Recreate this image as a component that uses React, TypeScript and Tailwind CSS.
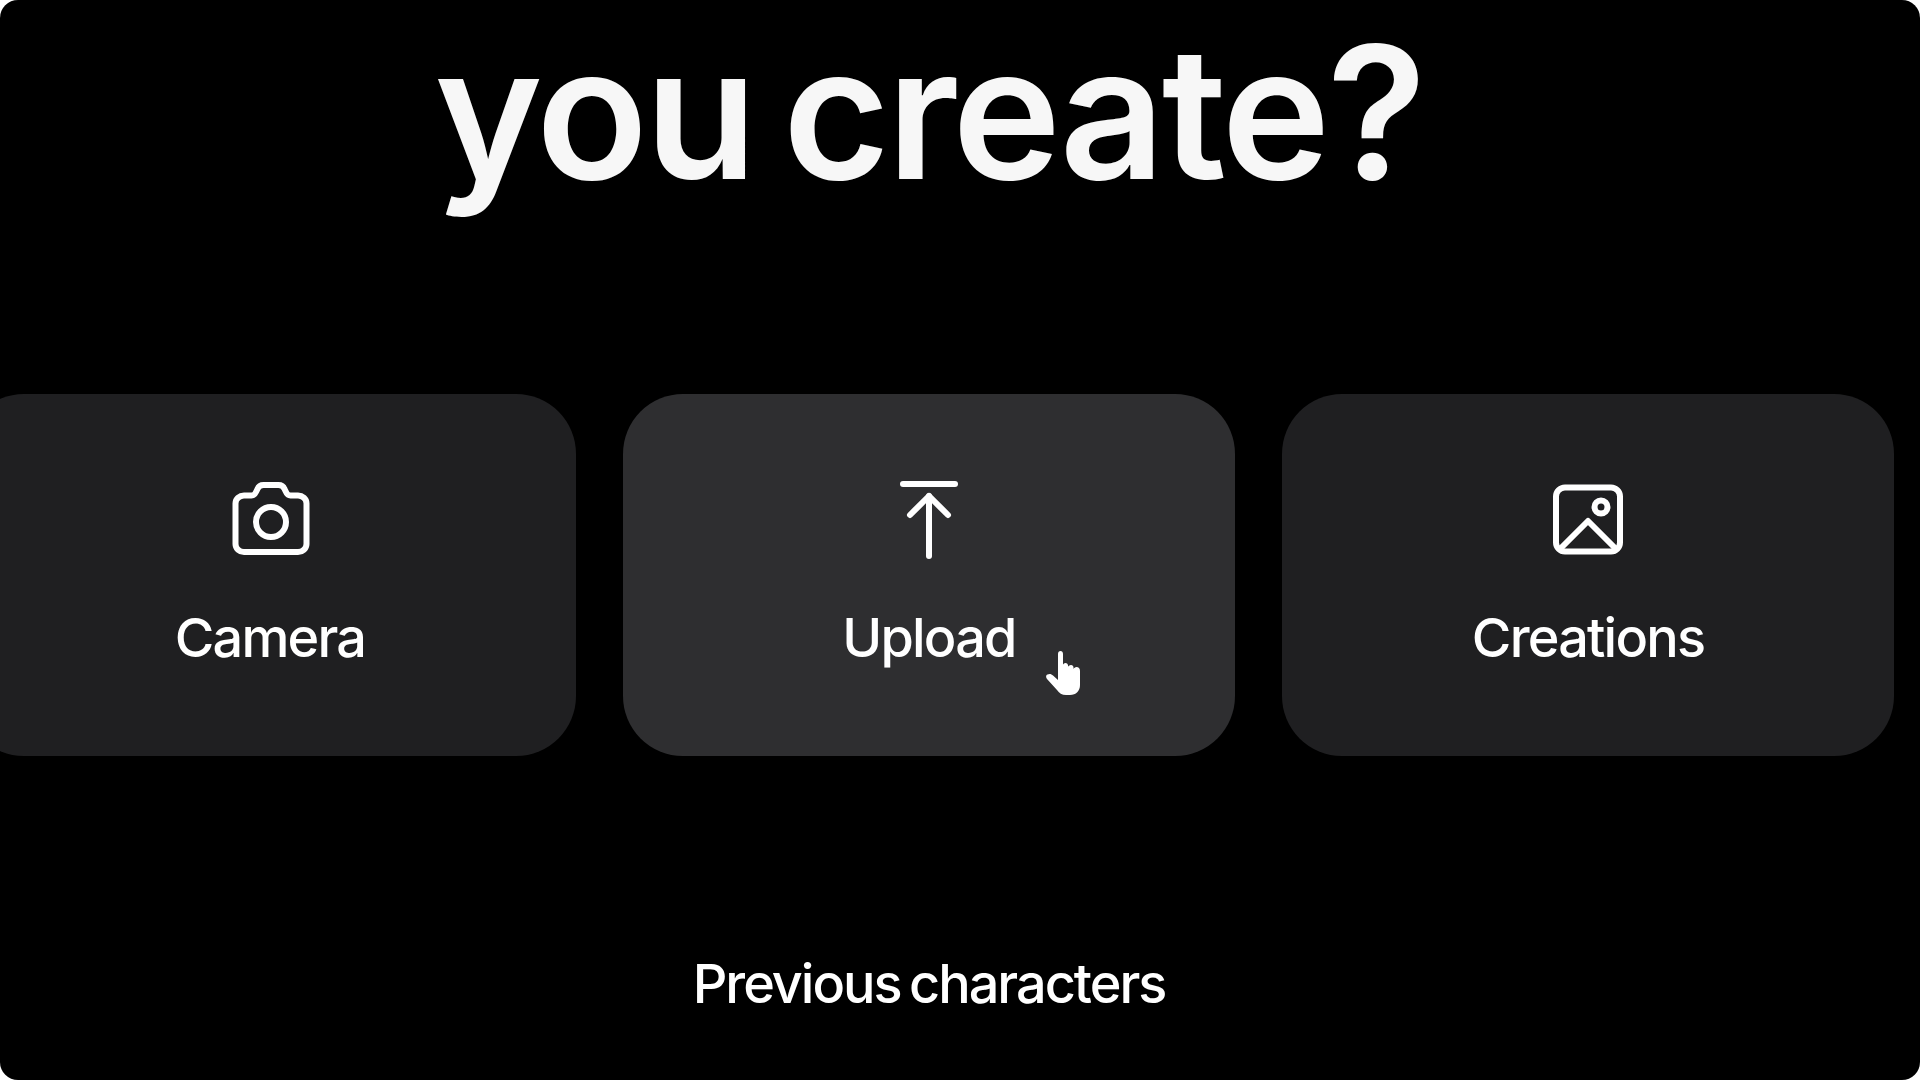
const font = { fontFamily: "Inter, 'Liberation Sans', sans-serif" };

function CameraIcon() {
  return (
    <svg viewBox="0 0 80 80" className="h-20 w-20" fill="none" stroke="currentColor" strokeWidth="6" strokeLinejoin="round">
      <g transform="translate(1 0)">
        <path d="M13 15.5H20.5C22.5 15.5 24 14.5 25 12L26.5 9C27.5 6.5 29.5 5 32.5 5H47.5C50.5 5 52.5 6.5 53.5 9L55 12C56 14.5 57.5 15.5 59.5 15.5H67C71.5 15.5 75.5 19 75.5 23.5V64C75.5 68.5 71.5 72 67 72H13C8.5 72 4.5 68.5 4.5 64V23.5C4.5 19 8.5 15.5 13 15.5Z" />
        <circle cx="40" cy="42" r="15" />
      </g>
    </svg>
  );
}

function UploadIcon() {
  return (
    <svg viewBox="0 0 80 80" className="h-20 w-20" fill="none" stroke="currentColor" strokeWidth="6" strokeLinecap="round" strokeLinejoin="round">
      <path d="M14 4H66" />
      <path d="M40 16V76" />
      <path d="M21 35L40 16L59 35" />
    </svg>
  );
}

function ImageIcon() {
  return (
    <svg viewBox="0 0 80 80" className="h-20 w-20" fill="none" stroke="currentColor" strokeWidth="6" strokeLinejoin="round">
      <rect x="8" y="7.5" width="64" height="64" rx="9" />
      <circle cx="53" cy="27" r="6.5" />
      <path d="M12 69L40 41L68 69" />
    </svg>
  );
}

function HandCursor() {
  return (
    <svg viewBox="0 0 34 44" className="h-11 w-[34px]" fill="#fff">
      <path d="M12 3C12 1 13 0 14.5 0C16 0 17 1 17 3V14C17 13 18 12 19.5 12C21 12 22 13 22 14.5V16C22 15 23.5 14 25 14C26.5 14 27.5 15 27.5 16.5V18C28 17 29 16 30.5 16C32.5 16 34 17.5 34 20V34C34 40 30 44 24 44H20C16 44 13 42 11 39L1 28C-0.5 26 0 24 1.5 23.5C3.5 22.5 5.5 23 7 24.5L12 29Z" />
    </svg>
  );
}

function Tile({ label, icon, active, children }: { label: string; icon: React.ReactNode; active?: boolean; children?: React.ReactNode }) {
  return (
    <div
      className={`relative flex h-[362px] w-[612px] shrink-0 flex-col items-center justify-center gap-[45px] rounded-[60px] text-white ${
        active ? "bg-[#2e2e30]" : "bg-[#1f1f21]"
      }`}
    >
      {icon}
      <span className="text-[54px] font-medium leading-[65px] tracking-[-1.8px]">{label}</span>
      {children}
    </div>
  );
}

export default function App() {
  return (
    <div className="h-[1080px] w-[1920px] overflow-hidden bg-white" style={font}>
      <div className="h-full w-full overflow-hidden rounded-[18px] bg-black">
        <div className="flex w-[1858px] flex-col items-center">
          <h1 className="mt-3 h-[200px] text-center text-[184px] font-semibold leading-[200px] tracking-[-3.4px] [word-spacing:-14px] text-[#f7f7f7] whitespace-nowrap">
            you create?
          </h1>
          <div className="mt-[182px] flex w-full justify-center gap-[47px]">
            <Tile label="Camera" icon={<CameraIcon />} />
            <Tile label="Upload" icon={<UploadIcon />} active>
              <div className="absolute left-[423px] top-[257px]">
                <HandCursor />
              </div>
            </Tile>
            <Tile label="Creations" icon={<ImageIcon />} />
          </div>
          <p className="mt-[195px] text-[54px] font-medium leading-[65px] tracking-[-2px] [word-spacing:-4px] text-white whitespace-nowrap">
            Previous characters
          </p>
        </div>
      </div>
    </div>
  );
}
